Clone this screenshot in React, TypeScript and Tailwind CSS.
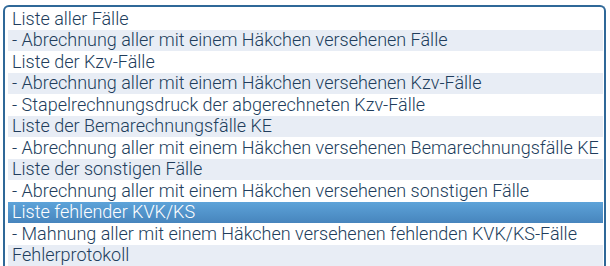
import React from "react";

const rows: string[] = [
  "Liste aller Fälle",
  "- Abrechnung aller mit einem Häkchen versehenen Fälle",
  "Liste der Kzv-Fälle",
  "- Abrechnung aller mit einem Häkchen versehenen Kzv-Fälle",
  "- Stapelrechnungsdruck der abgerechneten Kzv-Fälle",
  "Liste der Bemarechnungsfälle KE",
  "- Abrechnung aller mit einem Häkchen versehenen Bemarechnungsfälle KE",
  "Liste der sonstigen Fälle",
  "- Abrechnung aller mit einem Häkchen versehenen sonstigen Fälle",
  "Liste fehlender KVK/KS",
  "- Mahnung aller mit einem Häkchen versehenen fehlenden KVK/KS-Fälle",
  "Fehlerprotokoll",
];

const selected = 9;

export default function App() {
  return (
    <div className="h-[266px] overflow-hidden bg-white pt-[5px] pl-[3px] pr-[4px] font-['Roboto',sans-serif] font-light">
      <div className="h-[300px] rounded-t-[6px] border-2 border-b-0 border-[#2f6898] pt-px pl-[3px] pr-px">
        {rows.map((label, idx) => (
          <div
            key={idx}
            className={`flex h-[21.5px] items-center whitespace-nowrap pl-[4px] text-[18px] leading-none ${
              idx === selected
                ? "bg-gradient-to-b from-[#5da3d9] to-[#4785bd] text-white"
                : idx % 2 === 1
                ? "bg-[#e8edf5] text-[#213d5c]"
                : "bg-white text-[#213d5c]"
            }`}
          >
            {label}
          </div>
        ))}
      </div>
    </div>
  );
}
